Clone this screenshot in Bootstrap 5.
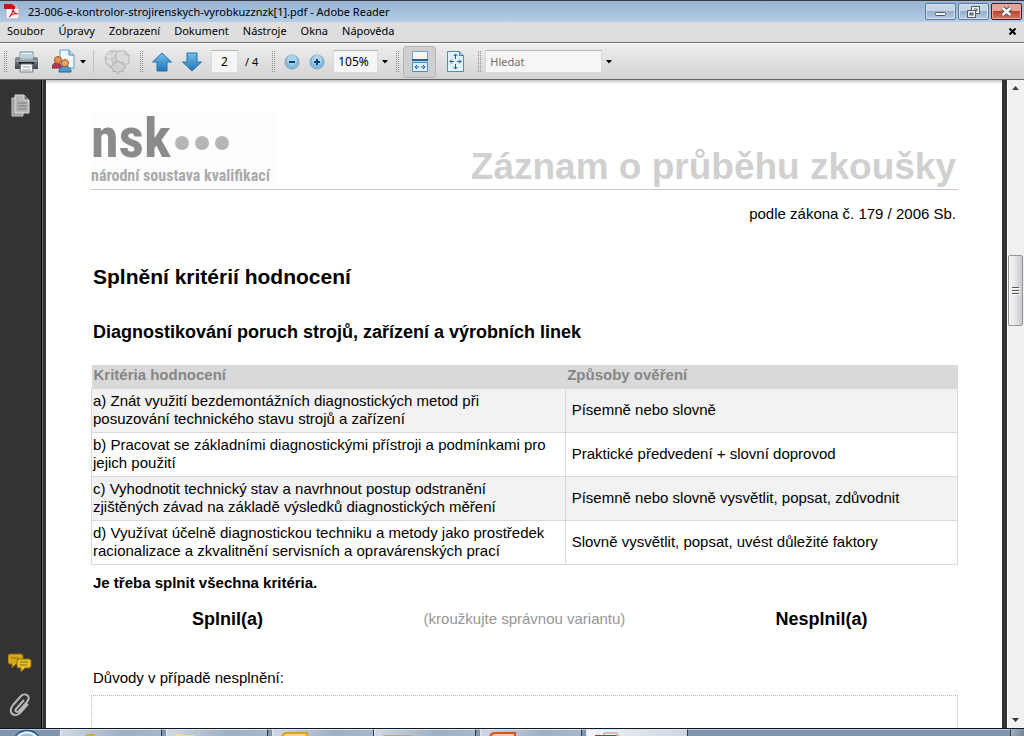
<!DOCTYPE html>
<html lang="cs">
<head>
<meta charset="utf-8">
<meta name="viewport" content="width=device-width, initial-scale=1">
<title>23-006-e-kontrolor-strojirenskych-vyrobkuzznzk[1].pdf - Adobe Reader</title>
<link href="https://cdn.jsdelivr.net/npm/bootstrap@5.3.0/dist/css/bootstrap.min.css" rel="stylesheet">
<style>
  body { font-family: "Noto Sans", "Open Sans", sans-serif; font-size: 11px; line-height: 16px; color: #000; background: #333; }
  button { border: 0; padding: 0; background: none; color: inherit; }
  svg { display: block; flex: none; }

  .titlebar { height: 22px; border-top: 1px solid #3c3b40; background: linear-gradient(#96b3d2, #b5cde8); }
  .win-set { gap: 2px; padding-right: 2px; }
  .win-btn { width: 31px; height: 17px; border: 1px solid #5f7893; border-radius: 2px; background: linear-gradient(#c4d5e8 0 48%, #96b0cc 50%, #b4cbe3); box-shadow: inset 0 0 0 1px #d3e0ee; display: flex; align-items: center; justify-content: center; }
  .win-close { border-color: #4d1422; background: linear-gradient(#e3a599 0 46%, #bd4530 50%, #d07a5f); box-shadow: inset 0 0 0 1px #e6aaa0; }
  .menubar { height: 21px; background: #dedede; border-bottom: 1px solid #707070; padding-bottom: 2px; }
  .menubar a { color: #000; text-decoration: none; padding: 0 7px; }
  .toolbar { height: 37px; border-top: 1px solid #fafafa; border-bottom: 1px solid #626262; background: linear-gradient(#eee, #d3d3d3); padding-left: 4px; }
  .grip { width: 3px; height: 21px; background: conic-gradient(#8f8f8f 25%, transparent 0) -1px 0 / 2px 2px; }
  .rule { width: 1px; height: 24px; background: #c3c3c3; }
  .tool { height: 32px; width: 30px; display: flex; align-items: center; justify-content: center; gap: 4px; }
  .tool-wide { width: 40px; }
  .tool-near { width: 25px; }
  .tool-on { width: 33px; border: 1px solid #b4b4b4; border-radius: 3px; background: #cfcfcf; }
  .field { height: 23px; border: 1px solid #dadada; border-top-color: #b5b5b5; background: #f6f6f6; padding: 0 4px; font-size: 12px; line-height: 16px; border-radius: 0; color: #000; }
  .page-no { width: 27px; text-align: center; }
  .page-total { margin: 0 14px 0 7px; }
  .zoom-pick { width: 45px; appearance: none; }
  .search-box { width: 117px; font-size: 11px; }
  .search-box::placeholder { color: #6f6f6f; opacity: 1; }

  .rail { width: 43px; background: #333; border-right: 1px solid #6a6a6a; box-shadow: inset -1px 0 #000; padding: 14px 2px 11px 0; }
  .viewer { padding: 0 5px 0 3px; background: #333; }
  .sheet { background: linear-gradient(#c4c4c4, #fff 4px); padding: 32px 44px 0 45px; font-family: "Liberation Sans", Arial, sans-serif; font-size: 15px; line-height: 18px; }
  .sheet-text { padding-left: 2px; padding-right: 2px; }
  .logo-box { font-family: "Roboto Condensed", "Liberation Sans Narrow", Roboto, "Liberation Sans", sans-serif; font-weight: 700; background: #fdfdfd; width: 185px; height: 74px; }
  .logo-word { font-size: 56px; line-height: 52px; color: #8b8b8b; }
  .logo-dots { gap: 6px; padding-top: 10px; }
  .logo-dot { width: 14px; height: 14px; border-radius: 50%; background: #b5b5b5; }
  .logo-sub { font-size: 16px; line-height: 24px; color: #aaa; white-space: nowrap; }
  .sheet-head { height: 78px; border-bottom: 1px solid #c8c8c8; }
  .sheet-title { font-size: 37px; line-height: 44px; font-weight: 700; color: #d0d0d0; }
  .sub-line { margin: 15px 0 0; }
  .head-1 { font-size: 21px; line-height: 24px; font-weight: 700; margin: 42px 0 0; }
  .head-2 { font-size: 18px; line-height: 22px; font-weight: 700; margin: 32px 0 0; }
  .criteria { width: 100%; margin-top: 22px; border-collapse: collapse; table-layout: fixed; }
  .criteria th { background: #d9d9d9; color: #868686; height: 23px; padding: 0 2px 2px; line-height: 18px; }
  .criteria td { border: 1px solid #d9d9d9; height: 44px; padding: 0 1px; line-height: 18px; }
  .criteria td + td { padding-left: 6px; }
  .criteria tbody tr:nth-child(odd) td { background: #f2f2f2; }
  .col-text { width: 54.7%; }
  .all-needed { margin: 9px 0 16px; }
  .verdict { font-size: 18px; line-height: 22px; }
  .hint { color: #969696; }
  .reasons-label { margin: 39px 0 8px; }
  .reasons { border: 1px dotted #bbb; border-bottom: 0; width: 100%; height: 60px; display: block; resize: none; background: none; }

  .scroller { width: 17px; background: #f1f1f1; border-left: 1px solid #fff; padding: 6px 1px 5px 0; }
  .thumb { width: 15px; height: 71px; border: 1px solid #949494; border-radius: 2px; background: linear-gradient(90deg, #f6f6f6, #e8e8ea 45%, #c9c9cf); margin-top: 164px; }

  .taskbar { height: 8px; border-top: 1px solid #0e1722; background: #8094ac; box-shadow: inset 0 1px #c2cedc; }
  .task { width: 102px; height: 16px; border: 1px solid #e1e8f0; border-right-color: #28394c; background: linear-gradient(100deg, #d0d8e2, #9fafc4 60%, #a9b7ca); padding-left: 8px; }
  .task-live { background: linear-gradient(100deg, #f3f5f8, #cbd4df); }
  .start { width: 60px; height: 20px; padding-left: 12px; }
  .peek { width: 14px; height: 16px; border-left: 1px solid #33424f; background: linear-gradient(120deg, #a9b6c4, #5f7182); }
</style>
</head>
<body>
<div class="d-flex flex-column vh-100 overflow-hidden">

  <header class="flex-shrink-0">
    <div class="titlebar d-flex align-items-center ps-1">
      <svg width="16" height="17" viewBox="0 0 16 17"><path d="M2 1h9l4 4v11H2z" fill="#fafafa" stroke="#aab"/><path d="M11 1v4h4" fill="#ddd" stroke="#999"/><path d="M0 1h8l3 2v3H0z" fill="#c8141c"/><path d="M5 14c2-1 4-5 4-8 1 4 2 5 5 5-3-1-6 0-8 2" fill="none" stroke="#d2232a" stroke-width="1.2"/></svg>
      <span class="ps-1 ms-1 flex-grow-1 text-truncate">23-006-e-kontrolor-strojirenskych-vyrobkuzznzk[1].pdf - Adobe Reader</span>
      <div class="win-set d-flex">
        <button class="win-btn" aria-label="Minimalizovat"><svg width="11" height="11" viewBox="0 0 11 11"><rect x=".5" y="6.500" width="10" height="3" rx="1" fill="#f4f4f4" stroke="#4b5968"/></svg></button>
        <button class="win-btn" aria-label="Obnovit"><svg width="13" height="12" viewBox="0 0 13 12"><path d="M4.500.5h8v7h-4v4h-8v-7h4z" fill="#f4f4f4" stroke="#4b5968"/><path d="M4.500 4.500h4v3M7 3h3v2H9" fill="none" stroke="#4b5968"/><rect x="3" y="7" width="3" height="2" fill="#8aa3bf" stroke="#4b5968"/></svg></button>
        <button class="win-btn win-close" aria-label="Zavřít"><svg width="13" height="11" viewBox="0 0 13 11"><path d="M2.500 2l8 7M10.500 2l-8 7" stroke="#514c5c" stroke-width="4.500"/><path d="M2.500 2l8 7M10.500 2l-8 7" stroke="#f6f6f6" stroke-width="2.600"/></svg></button>
      </div>
    </div>
    <nav class="menubar d-flex align-items-center">
      <a href="#">Soubor</a><a href="#">Úpravy</a><a href="#">Zobrazení</a><a href="#">Dokument</a><a href="#">Nástroje</a><a href="#">Okna</a><a href="#">Nápověda</a>
      <button class="ms-auto me-2" aria-label="Zavřít dokument"><svg width="7" height="7" viewBox="0 0 7 7"><path d="M.5.5l6 6M6.500.5l-6 6" stroke="#000" stroke-width="2"/></svg></button>
    </nav>
    <div class="toolbar d-flex align-items-center">
      <span class="grip"></span>
      <button class="tool ms-1" aria-label="Tisk"><svg width="23" height="24" viewBox="0 0 23 24"><defs><linearGradient id="ink" x2="0" y2="1"><stop stop-color="#8a9399"/><stop offset="1" stop-color="#3c4449"/></linearGradient></defs><path d="M5 2h13v7H5z" fill="#e9f2f5" stroke="#6f8792"/><path d="M1 7h4v3h13V7h4l1 2v10H0V9z" fill="url(#ink)"/><path d="M5 4h13v4H5z" fill="#b6d5df"/><path d="M1 11h21" stroke="#b8c0c4"/><path d="M4 13h15" stroke="#1e2528" stroke-width="2"/><path d="M6 14h11l1 8H5z" fill="#fafafa" stroke="#778"/><path d="M8 17h7M7 20h9" stroke="#999"/></svg></button>
      <button class="tool tool-wide ms-2" aria-label="Spolupráce"><svg width="24" height="25" viewBox="0 0 24 25"><path d="M8 1h9l5 5v13H8z" fill="#eef6fb" stroke="#5f9fc9"/><path d="M17 1v5h5" fill="#bcdcf0" stroke="#4287b8"/><path d="M0 19c0-7 9-7 10 0z" fill="#b33a55" stroke="#82243b"/><circle cx="6" cy="11" r="3.500" fill="#e39248" stroke="#a35524"/><path d="M7 23c0-8 12-8 12 0z" fill="#4c9ac9" stroke="#216694"/><circle cx="13" cy="14" r="3.500" fill="#eaa963" stroke="#9a5826"/></svg><svg width="6" height="4" viewBox="0 0 6 4"><path d="M0 0h6L3 3.500z"/></svg></button>
      <span class="rule ms-1 me-2"></span>
      <button class="tool" aria-label="Odeslat"><svg width="26" height="25" viewBox="0 0 26 25"><circle cx="9.500" cy="10" r="8.500" fill="#cdcdcd" stroke="#b8b8b8"/><path d="M2 6c5 3 6 1 10-3M2 12c5 3 7 2 10-1M6 3c-3 6 0 11 4 15" fill="none" stroke="#e4e4e4" stroke-width="1.500"/><path d="M12 4q0-2 3-2h6l4 4v9H12z" fill="#dcdcdc" stroke="#b4b4b4"/><path d="M21 2v4h4" fill="none" stroke="#b4b4b4"/><path d="M14 11l2 3 3-1 0 3 3 2-3 2 0 3-3-1-2 3-2-3-3 1 0-3-3-2 3-2 0-3 3 1z" fill="#d2d2d2" stroke="#b0b0b0"/></svg></button>
      <span class="grip ms-2"></span>
      <button class="tool ms-1" aria-label="Předchozí strana"><svg width="20" height="20" viewBox="0 0 20 20"><defs><linearGradient id="blue" x2="0" y2="1"><stop stop-color="#6fc2f0"/><stop offset="1" stop-color="#2173b5"/></linearGradient></defs><path d="M10 1l9.500 9H15v9H5v-9H.5z" fill="url(#blue)" stroke="#2c6fa5"/></svg></button>
      <button class="tool" aria-label="Další strana"><svg width="20" height="20" viewBox="0 0 20 20"><path d="M10 19l9.500-9H15V1H5v9H.5z" fill="url(#blue)" stroke="#2c6fa5"/></svg></button>
      <input class="field page-no ms-1" type="text" value="2" aria-label="Strana">
      <span class="page-total">/ 4</span>
      <span class="grip"></span>
      <button class="tool tool-near ms-1" aria-label="Zmenšit"><svg width="16" height="16" viewBox="0 0 16 16"><circle cx="8" cy="8" r="7" fill="#7fbce3" stroke="#8a9eac"/><circle cx="8" cy="6" r="5" fill="#a8d4f0"/><path d="M5 8h6" stroke="#123f6b" stroke-width="2"/></svg></button>
      <button class="tool tool-near" aria-label="Zvětšit"><svg width="16" height="16" viewBox="0 0 16 16"><circle cx="8" cy="8" r="7" fill="#7fbce3" stroke="#8a9eac"/><circle cx="8" cy="6" r="5" fill="#a8d4f0"/><path d="M5 8h6M8 5v6" stroke="#123f6b" stroke-width="2"/></svg></button>
      <select class="field zoom-pick ms-1" aria-label="Lupa"><option>105%</option></select>
      <svg class="ms-1" width="6" height="4" viewBox="0 0 6 4"><path d="M0 0h6L3 3.500z"/></svg>
      <span class="grip ms-2"></span>
      <button class="tool tool-on ms-1" aria-label="Přizpůsobit šířce"><svg width="16" height="21" viewBox="0 0 16 21"><path d="M.5.500h15v8H.5z" fill="#f4fafd" stroke="#6ca3c6"/><path d="M0 9h16" stroke="#1f6397" stroke-width="2"/><path d="M.5 11.500h15v9H.5z" fill="#dceefa" stroke="#4b8fbc"/><path d="M3 16h4M9 16h4M5 14l-2 2 2 2M11 14l2 2-2 2" stroke="#185c95" fill="none"/></svg></button>
      <button class="tool ms-1" aria-label="Celá strana"><svg width="17" height="21" viewBox="0 0 17 21"><path d="M.5.500h12l4 4v16H.5z" fill="#e2f2fb" stroke="#4b8fbc"/><path d="M12.500.500v4h4" fill="#9ec9e4" stroke="#3a7fae"/><path d="M8.500 3v5M8.500 13v5M3 10.500h4M10 10.500h4M6.500 5l2-2 2 2M6.500 16l2 2 2-2M5 8.500l-2 2 2 2M12 8.500l2 2-2 2" fill="none" stroke="#185c95"/></svg></button>
      <span class="grip ms-2"></span>
      <input class="field search-box ms-1" type="text" placeholder="Hledat" aria-label="Hledat">
      <svg class="ms-1" width="6" height="4" viewBox="0 0 6 4"><path d="M0 0h6L3 3.500z"/></svg>
    </div>
  </header>

  <div class="d-flex flex-grow-1 overflow-hidden">
    <aside class="rail d-flex flex-column align-items-center flex-shrink-0">
      <button aria-label="Stránky"><svg width="19" height="23" viewBox="0 0 19 23"><path d="M1 4h11v18H1z" fill="#999" stroke="#ccc"/><path d="M4 1h9l5 5v13H4z" fill="#b5b5b5" stroke="#ddd"/><path d="M13 1v5h5" fill="#666" stroke="#ddd"/><path d="M6.500 9h9M6.500 12h9M6.500 15h9" stroke="#777"/></svg></button>
      <button class="mt-auto mb-3 pb-1" aria-label="Komentáře"><svg width="24" height="20" viewBox="0 0 24 20"><path d="M2 1h11q2 0 2 2v6q0 2-2 2H8l-4 4v-4H2q-2 0-2-2V3q0-2 2-2z" fill="#d9a91c" stroke="#8d6a09"/><path d="M3 5h8" stroke="#8d6a09"/><path d="M11 6h10q2 0 2 2v5q0 2-2 2h-4l-4 4v-4h-2q-2 0-2-2V8q0-2 2-2z" fill="#e8c028" stroke="#8d6a09"/><path d="M12 9h8M12 12h7" stroke="#8d6a09"/></svg></button>
      <button aria-label="Přílohy"><svg width="22" height="24" viewBox="0 0 22 24"><path d="M15 7l-8 9c-2 2 1 4 3 2l8-9c5-6-2-10-6-6L4 12c-6 8 2 13 7 8l8-9" fill="none" stroke="#b9b9b9" stroke-width="2"/></svg></button>
    </aside>

    <main class="viewer d-flex flex-grow-1 overflow-hidden">
      <article class="sheet flex-grow-1">
        <div class="sheet-head d-flex justify-content-between">
          <div class="logo-box">
            <div class="d-flex align-items-center">
              <span class="logo-word">nsk</span>
              <span class="logo-dots d-flex ms-1"><i class="logo-dot"></i><i class="logo-dot"></i><i class="logo-dot"></i></span>
            </div>
            <div class="logo-sub">národní soustava kvalifikací</div>
          </div>
          <div class="sheet-title sheet-text align-self-end text-nowrap">Záznam o průběhu zkoušky</div>
        </div>
        <p class="sub-line sheet-text text-end">podle zákona č. 179 / 2006 Sb.</p>
        <h1 class="head-1 sheet-text">Splnění kritérií hodnocení</h1>
        <h2 class="head-2 sheet-text">Diagnostikování poruch strojů, zařízení a výrobních linek</h2>
        <table class="criteria">
          <colgroup><col class="col-text"><col></colgroup>
          <thead><tr><th>Kritéria hodnocení</th><th>Způsoby ověření</th></tr></thead>
          <tbody>
            <tr><td>a) Znát využití bezdemontážních diagnostických metod při<br>posuzování technického stavu strojů a zařízení</td><td>Písemně nebo slovně</td></tr>
            <tr><td>b) Pracovat se základními diagnostickými přístroji a podmínkami pro<br>jejich použití</td><td>Praktické předvedení + slovní doprovod</td></tr>
            <tr><td>c) Vyhodnotit technický stav a navrhnout postup odstranění<br>zjištěných závad na základě výsledků diagnostických měření</td><td>Písemně nebo slovně vysvětlit, popsat, zdůvodnit</td></tr>
            <tr><td>d) Využívat účelně diagnostickou techniku a metody jako prostředek<br>racionalizace a zkvalitnění servisních a opravárenských prací</td><td>Slovně vysvětlit, popsat, uvést důležité faktory</td></tr>
          </tbody>
        </table>
        <p class="all-needed sheet-text fw-bold">Je třeba splnit všechna kritéria.</p>
        <div class="row text-center align-items-center">
          <div class="col verdict fw-bold">Splnil(a)</div>
          <div class="col hint text-nowrap">(kroužkujte správnou variantu)</div>
          <div class="col verdict fw-bold">Nesplnil(a)</div>
        </div>
        <label class="reasons-label sheet-text d-block" for="reasons">Důvody v případě nesplnění:</label>
        <textarea class="reasons" id="reasons"></textarea>
      </article>
    </main>

    <div class="scroller d-flex flex-column align-items-center flex-shrink-0">
      <svg width="7" height="5" viewBox="0 0 7 5"><path d="M3.500 0L7 4H0z" fill="#444"/></svg>
      <div class="thumb d-flex align-items-center justify-content-center"><svg width="8" height="9" viewBox="0 0 8 9"><path d="M0 1.500h7M0 4.500h7M0 7.500h7" stroke="#555"/><path d="M1 2.500h7M1 5.500h7M1 8.500h7" stroke="#fff"/></svg></div>
      <svg class="mt-auto" width="7" height="5" viewBox="0 0 7 5"><path d="M3.500 4L7 0H0z" fill="#333"/></svg>
    </div>
  </div>

  <footer class="taskbar d-flex flex-shrink-0 overflow-hidden">
    <button class="start" aria-label="Start"><svg width="30" height="20" viewBox="0 0 30 20"><ellipse cx="15" cy="15" rx="14" ry="13.500" fill="#9dbdd6" stroke="#245680" stroke-width="1.500"/><path d="M5 8q10-9 20 0" fill="none" stroke="#e3f0f8" stroke-width="2"/></svg></button>
    <button class="task" aria-label="Prohlížeč"><svg width="30" height="12" viewBox="0 0 30 12"><path d="M12 9q9-8 14-4" fill="none" stroke="#dca72f" stroke-width="2"/></svg></button>
    <button class="task ms-1" aria-label="Průzkumník"><svg width="24" height="12" viewBox="0 0 24 12"><path d="M0 2l8 2 11 0v8H0z" fill="#efdf97"/></svg></button>
    <button class="task ms-1" aria-label="Pošta"><svg width="28" height="12" viewBox="0 0 28 12"><path d="M1 12V6q1-4 5-4h20v10" fill="#f8dc72" stroke="#dca11c" stroke-width="2"/></svg></button>
    <button class="task" aria-label="Dokumenty"><svg width="30" height="12" viewBox="0 0 30 12"><path d="M0 4h30v8H0z" fill="#b1ad8c"/></svg></button>
    <button class="task ms-1" aria-label="Prezentace"><svg width="28" height="12" viewBox="0 0 28 12"><path d="M1 12V6q1-4 5-4h20v10" fill="#f8c9a2" stroke="#dc521c" stroke-width="2"/></svg></button>
    <button class="task task-live ms-1" aria-label="Adobe Reader"><svg width="26" height="12" viewBox="0 0 26 12"><path d="M9 2h13l2 3v7H9z" fill="#eee" stroke="#999"/><path d="M0 4h22v8H0z" fill="#c52a30"/></svg></button>
    <button class="peek ms-auto" aria-label="Zobrazit plochu"></button>
  </footer>
</div>
<script src="https://cdn.jsdelivr.net/npm/bootstrap@5.3.0/dist/js/bootstrap.bundle.min.js"></script>
</body>
</html>
